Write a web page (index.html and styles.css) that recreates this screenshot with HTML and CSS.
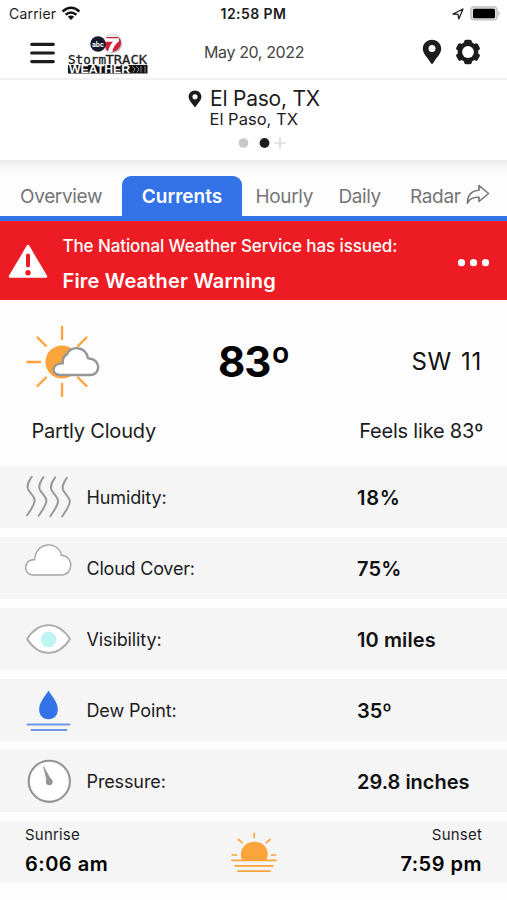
FILE: index.html
```html
<!DOCTYPE html>
<html lang="en">
<head>
<meta charset="utf-8">
<title>StormTRACK Weather</title>
<link rel="stylesheet" href="styles.css">
</head>
<body>
<div class="status">
  <div class="carrier"><span>Carrier</span>
    <svg width="20" height="15" viewBox="0 0 20 15"><g fill="none" stroke="#111" stroke-width="2.5"><path d="M1.6 5.5Q10-2 18.4 5.5"/><path d="M4.6 8.8Q10 4.2 15.4 8.8"/></g><path d="M6.8 10.8Q10 8.2 13.2 10.8L10 14Z" fill="#111"/></svg>
  </div>
  <div class="clock">12:58 PM</div>
  <div class="power">
    <svg width="12" height="12" viewBox="0 0 12 12"><path d="M1 6L11 1L6.8 11L6 6.4Z" fill="none" stroke="#222" stroke-width="1.3" stroke-linejoin="round"/></svg>
    <svg width="31" height="15" viewBox="0 0 31 15"><rect x=".8" y=".8" width="26.4" height="13.2" rx="3.5" fill="#ddd" stroke="#bbb" stroke-width="1.2"/><rect x="3" y="2.7" width="22" height="9.5" rx="1.5"/><path d="M28.5 5Q31 7.5 28.5 10Z" fill="#aaa"/></svg>
  </div>
</div>
<header class="topbar">
  <svg class="menu" width="26" height="22" viewBox="0 0 26 22"><path d="M1.7 2.3H23.3M1.7 11H23.3M1.7 19.6H23.3" stroke="#1c1c1e" stroke-width="3.2" stroke-linecap="round"/></svg>
  <svg class="logo" width="82" height="42" viewBox="0 0 82 42">
    <defs><radialGradient id="ball" cx=".45" cy=".4" r=".65"><stop offset="0" stop-color="#fff"/><stop offset=".65" stop-color="#e2e2e2"/><stop offset="1" stop-color="#aaa"/></radialGradient></defs>
    <circle cx="45.3" cy="10.2" r="10" fill="url(#ball)"/>
    <path d="M37.5 10.5Q37 5 40.5 4H51Q55 6.5 53.8 12Q51.5 18 45 19Q40 19 38.5 15Z" fill="#cf2238"/>
    <path d="M38 5.3H52V8.2Q46.5 12 45.3 19H41Q42 13 46 8.8H38Z" fill="#fff"/>
    <circle cx="31" cy="11" r="7.7" fill="#15182c"/>
    <text class="abc" x="25" y="13.6" textLength="12" lengthAdjust="spacingAndGlyphs">abc</text>
    <text class="storm" x="1" y="31" textLength="38" lengthAdjust="spacingAndGlyphs">Storm</text>
    <text class="storm track" x="38.5" y="31" textLength="41.5" lengthAdjust="spacingAndGlyphs">TRACK</text>
    <rect x="1" y="32" width="79.5" height="8.5" fill="#111"/>
    <text class="weather" x="2" y="39.5" textLength="61" lengthAdjust="spacingAndGlyphs">WEATHER</text>
    <path d="M65 33L68 36L66 39.5M69 33L72 36L70 39.5M74 33V39.5M78 33V39.5" fill="none" stroke="#aaa" stroke-width=".8"/>
  </svg>
  <time class="date">May 20, 2022</time>
  <svg class="place" width="20" height="26" viewBox="0 0 20 26"><path fill="#1c1c1e" fill-rule="evenodd" d="M10 .8C4.8.8.8 4.8.8 9.8C.8 15 5.5 18.3 8.8 24Q10 26 11.2 24C14.5 18.3 19.2 15 19.2 9.8C19.2 4.8 15.2.8 10 .8ZM10 6A3.5 3.5 0 1 1 10 13A3.5 3.5 0 1 1 10 6Z"/></svg>
  <svg class="gear" width="26" height="26" viewBox="-13 -13 26 26"><g fill="#1c1c1e"><rect id="t" x="-3.8" y="-12.3" width="7.6" height="24.6" rx="1.8"/><use href="#t" transform="rotate(60)"/><use href="#t" transform="rotate(120)"/><circle r="10.4"/></g><circle r="5.9" fill="#fff"/></svg>
</header>
<section class="location">
  <div class="city"><svg width="14" height="18" viewBox="0 0 20 26"><path fill="#1c1c1e" fill-rule="evenodd" d="M10 .8C4.8.8.8 4.8.8 9.8C.8 15 5.5 18.3 8.8 24Q10 26 11.2 24C14.5 18.3 19.2 15 19.2 9.8C19.2 4.8 15.2.8 10 .8ZM10 6A3.7 3.7 0 1 1 10 13.4A3.7 3.7 0 1 1 10 6Z"/></svg><span>El Paso, TX</span></div>
  <div class="sub">El Paso, TX</div>
  <svg class="pager" width="50" height="14" viewBox="0 0 50 14"><circle cx="6.5" cy="7" r="4.8" fill="#c8c8ca"/><circle cx="27.5" cy="7" r="4.9" fill="#1c1c1e"/><path d="M37 7H49M43 1V13" stroke="#dcdcdc" stroke-width="1.6"/></svg>
</section>
<nav class="tabs">
  <a class="tab overview">Overview</a><a class="tab active"><span>Currents</span></a><a class="tab hourly">Hourly</a><a class="tab daily">Daily</a><a class="tab radar">Radar</a>
  <svg class="share" width="24" height="22" viewBox="0 0 24 22"><path d="M13 1.5L22.5 9.5L13 17.5V13.3C7 13 3.5 15 1.4 19.2C1.5 11.5 5 6.7 13 6.2Z" fill="none" stroke="#757578" stroke-width="1.6" stroke-linejoin="round"/></svg>
</nav>
<section class="alert">
  <svg class="warn" width="40" height="36" viewBox="0 0 40 36"><path d="M20 3L38 33.5H2Z" fill="#fff" stroke="#fff" stroke-width="2.5" stroke-linejoin="round"/><path d="M20 12.5V22.5" stroke="#ed1c24" stroke-width="4" stroke-linecap="round"/><circle cx="20" cy="29.7" r="2.7" fill="#ed1c24"/></svg>
  <div class="message"><div class="issued">The National Weather Service has issued:</div><div class="warning">Fire Weather Warning</div></div>
  <svg class="more" width="34" height="10" viewBox="0 0 34 10"><g fill="#fff"><circle cx="4.5" cy="4.7" r="3.6"/><circle cx="16.5" cy="4.7" r="3.6"/><circle cx="28.5" cy="4.7" r="3.6"/></g></svg>
</section>
<main>
  <section class="now">
    <div class="headline">
      <svg class="sun" width="75" height="74" viewBox="0 0 75 74"><g stroke="#fba43b" stroke-width="2.4" stroke-linecap="round"><path d="M37 3V15M37 60V72M2.5 38H15M12.5 13.5L21 22M61.5 13.5L53 22M12.5 62L21 53.5M61.5 62L53 53.5"/></g><circle cx="37" cy="38" r="16.6" fill="#fba43b"/><path d="M35 50.8C26 50.8 26 39 37.8 39.2C37.5 33 40 31 42 30.3C44 22 60.5 20.5 63 34.2C76.5 34.5 76 50.8 65 50.8Z" transform="translate(0 .2)" fill="#fff" stroke="#939597" stroke-width="2.4" stroke-linejoin="round"/></svg>
      <div class="temp">83º</div><div class="wind">SW 11</div>
    </div>
    <div class="summary"><span class="condition">Partly Cloudy</span><span class="feels">Feels like 83º</span></div>
  </section>
  <section class="details">
    <div class="row"><svg viewBox="0 0 48 44"><g fill="none" stroke="#97999b" stroke-width="2" stroke-linecap="round"><path id="wave" d="M7.7 1.8C5 6 2.5 9.5 4 14C5.5 18 10.5 21 10.7 25.5C10.5 30 6 36 3 40.5"/><use href="#wave" x="11.7" y=".3"/><use href="#wave" x="23.4" y=".6"/><use href="#wave" x="35.1" y="1"/></g></svg><span class="label humidity">Humidity:</span><strong class="v1">18%</strong></div>
    <div class="row"><svg class="cloud" viewBox="0 0 48 44"><path d="M9 32C-1 32-1 16 10.5 16.8C12-2.5 35-2 37.4 12.3C50 12.8 50 32 37 32Z" fill="#fff" stroke="#a0a2a4" stroke-width="1.4"/></svg><span class="label cover">Cloud Cover:</span><strong class="v2">75%</strong></div>
    <div class="row"><svg viewBox="0 0 48 44"><path d="M3 22C15 3.5 34 3.5 46 22C34 40.5 15 40.5 3 22Z" fill="#fff" stroke="#aaa" stroke-width="1.9" stroke-linejoin="round"/><circle cx="24.5" cy="22.5" r="7.8" fill="#bcf5f1"/></svg><span class="label visibility">Visibility:</span><strong class="v3">10 miles</strong></div>
    <div class="row"><svg viewBox="0 0 48 44"><path d="M24.5 2.5C20.5 9 15.2 14 15.2 21.5C15.2 27.5 19 31.2 24.5 31.2C30 31.2 33.8 27.5 33.8 21.5C33.8 14 28.5 9 24.5 2.5Z" fill="#3472e8"/><path d="M3.5 36.5H45.5M7.5 42H42.5" stroke="#6c97e5" stroke-width="1.9" stroke-linecap="round"/></svg><span class="label dew">Dew Point:</span><strong class="v4">35º</strong></div>
    <div class="row"><svg viewBox="0 0 48 44"><circle cx="25.3" cy="22.3" r="20.6" fill="#fff" stroke="#939597" stroke-width="2.1"/><circle cx="25.3" cy="22.8" r="3.4" fill="#939597"/><path d="M19.5 7.4L22.9 22L27 20.8Z" fill="#939597" stroke="#939597" stroke-width=".6"/></svg><span class="label pressure">Pressure:</span><strong class="v5">29.8 inches</strong></div>
  </section>
  <section class="daylight">
    <div class="event"><div class="name sunrise">Sunrise</div><strong class="am">6:06 am</strong></div>
    <svg width="48" height="44" viewBox="0 0 48 44"><path d="M12.5 28.5C7.5 19 14.5 9.7 24.5 9.7S41 19 36 28.5Z" fill="#fba43b"/><g stroke="#fba43b" stroke-width="1.7" stroke-linecap="round"><path d="M24.2 1.3V5.5M8.5 7.5L12 10.7M40 7.5L36.5 10.7M2.3 23H6.5M41.5 23H45.7M2 28.3H46M5 33.8H43M8 39.2H40"/></g></svg>
    <div class="event end"><div class="name sunset">Sunset</div><strong class="pm">7:59 pm</strong></div>
  </section>
</main>
</body>
</html>
```
FILE: styles.css
```css
*{box-sizing:border-box}
body{margin:0;width:507px;height:900px;overflow:hidden;background:#fdfdfd;color:#1c1c1e;font-family:Inter,"Liberation Sans",sans-serif;white-space:nowrap}
svg{display:block;flex:none}
.status{display:grid;grid-template-columns:1fr 100px 1fr;height:27px;align-items:center;background:#fff;font-size:14px;line-height:27px}
.carrier{display:flex;align-items:center;gap:5px;padding-left:9px;letter-spacing:.2px}
.carrier svg{margin-top:-1px}
.clock{text-align:center;font-weight:600;letter-spacing:.45px}
.power{display:flex;align-items:center;justify-content:flex-end;gap:6px;padding-right:6px}
.topbar{display:flex;height:53px;background:#fff;border-bottom:2px solid #f0f0f0}
.menu{margin:15px 0 0 30px}
.logo{margin:6px 0 0 11px}
.abc{font:700 7px Inter,sans-serif;fill:#fff}
.storm{font:400 11.5px "DejaVu Sans Mono",monospace;fill:#222;stroke:#222;stroke-width:.3px}
.track{font-size:13px}
.weather{font:700 10px "Liberation Sans",sans-serif;fill:#fff}
.date{margin:15px 0 0 54px;padding-left:1px;width:119px;font-size:16px;line-height:21px;color:#444;letter-spacing:-.38px}
.place{margin:12px 0 0 99.5px}
.gear{margin:12px 0 0 13px}
.location{height:80px;background:#fff;padding-top:7px}
.city{display:flex;align-items:center;margin-left:188px;gap:8px;font-size:21px;line-height:24px;letter-spacing:-.22px}
.city svg{margin-top:-1px}
.sub{margin-left:209.5px;font-size:16.5px;line-height:16px;letter-spacing:.02px}
.pager{margin:9px 0 0 237px}
.tabs{display:flex;height:61px;padding-top:16px;border-bottom:5px solid #3472e8;color:#757578;font-size:19px;line-height:41px;letter-spacing:-.35px;background:linear-gradient(#ebebeb,#f4f4f4 6px,#fafafa 10px,#fdfdfd 18px)}
.overview{margin-left:20px;width:102px}
.active{width:120px;height:40px;background:#3472e8;color:#fff;font-weight:600;border-radius:9px 9px 0 0;text-align:center;letter-spacing:0}
.hourly{margin-left:13.5px;width:83px}
.daily{width:71.5px;letter-spacing:-.45px}
.radar{width:55.5px}
.share{margin-top:8px}
.alert{display:flex;height:79px;background:#ed1c24;color:#fff}
.warn{margin:22px 0 0 8px}
.message{margin:14px 0 0 14.5px;width:394.5px}
.issued{font-size:17px;line-height:22px;font-weight:500;letter-spacing:-.1px}
.warning{font-size:20px;line-height:26px;margin-top:11px;font-weight:600;letter-spacing:.19px}
.more{margin-top:37px}
.now{height:165px;display:flex;flex-direction:column}
.headline{display:flex;height:115px;color:#111}
.sun{margin:24px 0 0 25px}
.temp{margin:36px 0 0 118px;width:193.5px;font-size:42px;line-height:52px;font-weight:700;color:#000;letter-spacing:-1px}
.wind{margin-top:46px;font-size:24px;line-height:32px;letter-spacing:-.2px;word-spacing:2px}
.wind{letter-spacing:.6px}
.summary{display:flex;justify-content:space-between;padding:2px 24px 0 31.5px;font-size:20px;line-height:28px;letter-spacing:-.2px}
.details{display:flex;flex-direction:column;gap:9px;padding-top:1px}
.row{height:62px;display:flex;align-items:center;background:#f5f5f5;font-size:18px}
.row svg{width:48px;height:44px;margin-left:24px}
.row .cloud{margin-top:-7px}
.label{margin-left:14.5px;width:270.5px;letter-spacing:-.12px}
.cover{letter-spacing:-.22px}
.row strong{font-size:20px;font-weight:600;color:#111;padding-top:2px}
.row .v1{letter-spacing:.8px}
.row .v2{letter-spacing:.2px}
.row .v3{letter-spacing:.1px}
.daylight{display:flex;justify-content:space-between;height:61px;margin-top:9px;padding:0 25px;background:#f5f5f5}
.daylight svg{margin:11px 0 0 0}
.event{width:180px;padding-top:4px}
.event strong{display:block;font-size:20px;line-height:26px;font-weight:600;margin-top:6px;color:#000;letter-spacing:.5px}
.name{font-size:15px;line-height:20px;letter-spacing:.2px}
.end{text-align:right}
```
